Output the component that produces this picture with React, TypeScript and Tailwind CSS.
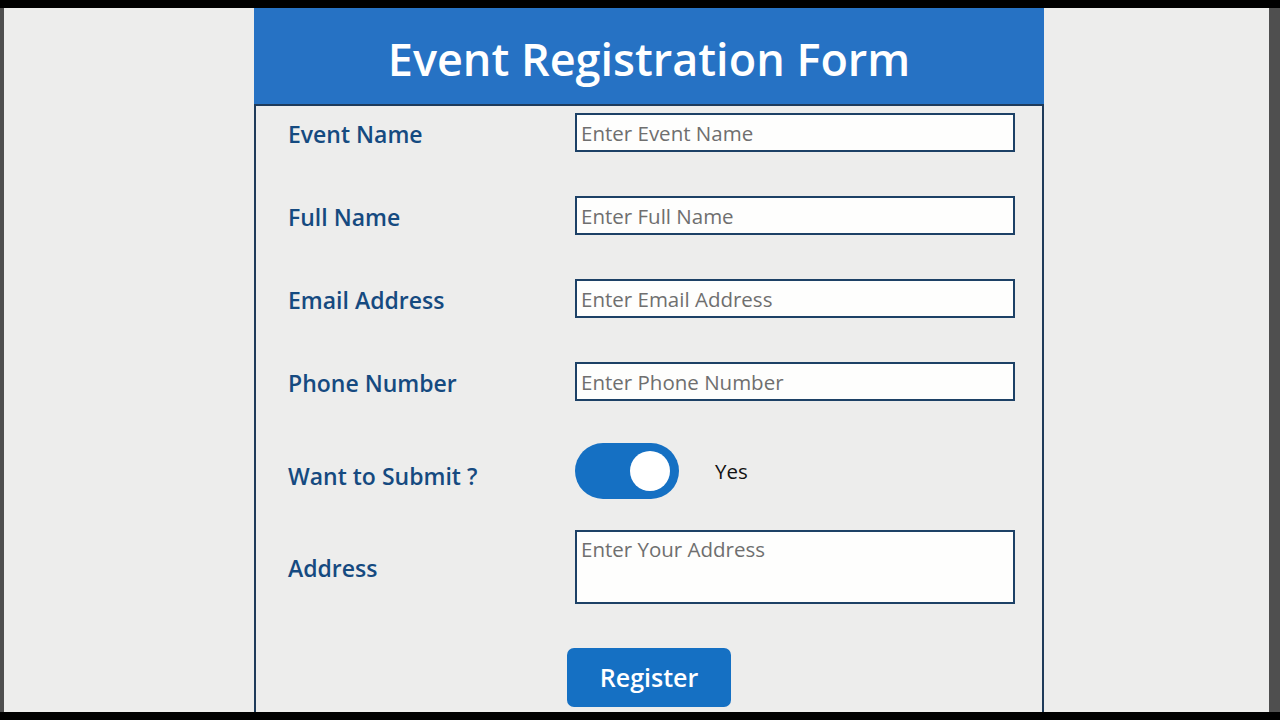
import React from "react";

const font = { fontFamily: '"Open Sans", "Noto Sans", sans-serif' };

function Row({ label, children, labelClass = "" }: { label: string; children: React.ReactNode; labelClass?: string }) {
  return (
    <div className="flex items-center">
      <div className={`w-[287px] shrink-0 text-[23px] font-semibold text-[#154a80] ${labelClass}`}>{label}</div>
      {children}
    </div>
  );
}

function Field({ placeholder }: { placeholder: string }) {
  return (
    <input
      placeholder={placeholder}
      className="box-border h-[39px] w-[440px] border-2 border-[#1d4166] bg-[#fefefd] px-[4px] text-[20.5px] text-black outline-none placeholder:text-[#6f6f6f]"
      style={font}
    />
  );
}

export default function App() {
  return (
    <div className="flex h-screen w-full flex-col overflow-hidden bg-black" style={font}>
      <div className="h-[8px] shrink-0 bg-black" />
      <div className="flex min-h-0 flex-1">
        <div className="w-[4px] shrink-0 bg-[#4f4f4f]" />
        <div className="min-w-0 flex-1 overflow-hidden bg-[#ededec]">
          <div className="ml-[250px] w-[790px]">
            <div className="flex h-[96px] items-center justify-center bg-[#2672c4] pt-[4px]">
              <h1 className="text-[45px] font-semibold leading-none text-white">Event Registration Form</h1>
            </div>
            <div className="h-[620px] border-x-2 border-t-2 border-[#1f3b5a] pl-[32px] pt-[7px]">
              <div className="flex flex-col gap-[44px]">
                <Row label="Event Name" labelClass="mt-[3px]"><Field placeholder="Enter Event Name" /></Row>
                <Row label="Full Name" labelClass="mt-[3px]"><Field placeholder="Enter Full Name" /></Row>
                <Row label="Email Address" labelClass="mt-[3px]"><Field placeholder="Enter Email Address" /></Row>
                <Row label="Phone Number" labelClass="mt-[3px]"><Field placeholder="Enter Phone Number" /></Row>
              </div>
              <div className="mt-[42px]">
                <Row label="Want to Submit ?" labelClass="mt-[11px]">
                  <div className="flex items-center">
                    <div className="flex h-[56px] w-[104px] items-center justify-end rounded-full bg-[#1570c3] pr-[9px]">
                      <div className="h-[40px] w-[40px] rounded-full bg-white" />
                    </div>
                    <span className="ml-[36px] text-[20.5px] text-[#111]">Yes</span>
                  </div>
                </Row>
              </div>
              <div className="mt-[31px]">
                <Row label="Address" labelClass="mt-[3px]">
                  <textarea
                    placeholder="Enter Your Address"
                    className="box-border h-[74px] w-[440px] resize-none border-2 border-[#1d4166] bg-[#fefefd] px-[4px] pt-[4px] text-[20.5px] leading-[26px] text-black outline-none placeholder:text-[#6f6f6f]"
                    style={font}
                  />
                </Row>
              </div>
              <div className="mt-[44px] flex pl-[279px]">
                <button className="h-[59px] w-[164px] rounded-[7px] bg-[#1570c3] text-[25px] font-semibold text-white" style={font}>
                  Register
                </button>
              </div>
            </div>
          </div>
        </div>
        <div className="w-[11px] shrink-0 bg-[#4f4f4f]" />
      </div>
      <div className="h-[8px] shrink-0 bg-black" />
    </div>
  );
}
